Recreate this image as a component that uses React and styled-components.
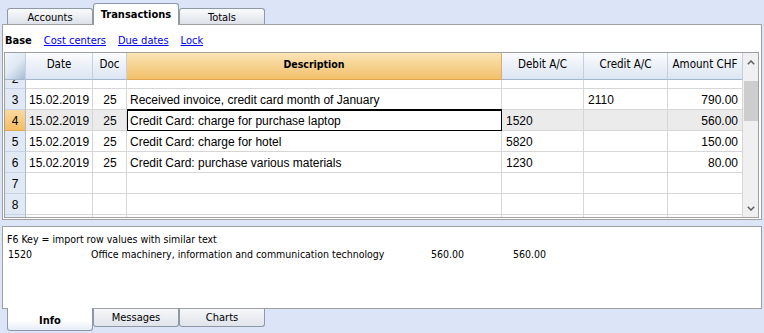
import React from 'react';
import styled, { createGlobalStyle, css } from 'styled-components';

const UI = `"DejaVu Sans Condensed", "DejaVu Sans", sans-serif`;
const CELL = `"Liberation Sans", Arial, sans-serif`;

const Global = createGlobalStyle`
  html, body { margin: 0; padding: 0; background: #dbe5f7; }
  body {
    font-family: ${UI};
    font-stretch: condensed;
    font-size: 11px;
    color: #000;
    width: 764px;
    height: 333px;
    overflow: hidden;
  }
`;

const Page = styled.div`
  display: flex;
  flex-direction: column;
  width: 764px;
  height: 333px;
`;

const TopStrip = styled.div`
  display: flex;
  align-items: flex-end;
  height: 24px;
  padding-left: 7px;
`;

const TopTab = styled.div`
  box-sizing: border-box;
  width: 86px;
  height: ${p => (p.$active ? 22 : 16)}px;
  border: 1px solid #8f99a6;
  border-bottom: none;
  border-radius: 3px 3px 0 0;
  display: flex;
  align-items: center;
  justify-content: center;
  padding-top: ${p => (p.$active ? 0 : 1)}px;
  background: linear-gradient(#fafbfc, #dde2e9);
  ${p =>
    p.$active &&
    css`
      background: #fff;
      font-weight: bold;
      margin-bottom: -1px;
      position: relative;
      z-index: 1;
    `}
`;

const Panel = styled.div`
  box-sizing: border-box;
  margin-left: 2px;
  width: 760px;
  height: 196px;
  border: 1px solid #a0a0a0;
  background: #fff;
  display: flex;
  flex-direction: column;
`;

const LinkBar = styled.div`
  height: 27px;
  display: flex;
  align-items: center;
  gap: 12px;
  padding: 3px 0 0 2px;
  box-sizing: border-box;
`;

const BaseLabel = styled.span`
  font-weight: bold;
`;

const LinkItem = styled.a`
  color: #0000ee;
  text-decoration: underline;
  cursor: pointer;
`;

const GridFrame = styled.div`
  box-sizing: border-box;
  margin-left: 1px;
  width: 755px;
  height: 166px;
  border: 1px solid #a0a0a0;
  display: flex;
`;

const GridArea = styled.div`
  width: 738px;
  display: flex;
  flex-direction: column;
`;

const COLS = '21px 67px 34px 375px 82px 84px 75px';

const HeaderRow = styled.div`
  display: grid;
  grid-template-columns: ${COLS};
  height: 27px;
`;

const HeadCell = styled.div`
  box-sizing: border-box;
  border-right: 1px solid #c3d0e1;
  border-bottom: 1px solid #a3b6ce;
  background: linear-gradient(#fbfcfe, #dbe5f2);
  display: flex;
  align-items: center;
  justify-content: center;
  padding-bottom: 4px;
  font-size: 11.5px;
  ${p =>
    p.$focus &&
    css`
      background: linear-gradient(#fbe4b6, #f2c06a);
      border-right-color: #e0ad62;
      border-bottom-color: #e0a550;
      font-weight: bold;
      font-size: 10.5px;
    `}
  ${p =>
    p.$corner &&
    css`
      background: linear-gradient(135deg, #f4f7fc 0%, #dfe8f4 50%, #a9bdd6 100%);
    `}
`;

const BodyClip = styled.div`
  height: 137px;
  overflow: hidden;
`;

const BodyScroll = styled.div`
  margin-top: -12px;
`;

const Row = styled.div`
  display: grid;
  grid-template-columns: ${COLS};
  height: 21px;
`;

const RowHead = styled.div`
  box-sizing: border-box;
  border-right: 1px solid #a9bcd5;
  border-bottom: 1px solid #c6d3e4;
  background: #e1e9f5;
  font-family: ${CELL};
  font-size: 12px;
  display: flex;
  align-items: center;
  justify-content: center;
  padding-top: 1px;
  ${p =>
    p.$active &&
    css`
      background: linear-gradient(#fcd9a0, #f7bd62);
      border-bottom-color: #e2a852;
    `}
`;

const Cell = styled.div`
  box-sizing: border-box;
  border-right: 1px solid #d6d6d6;
  border-bottom: 1px solid #d6d6d6;
  background: ${p => (p.$sel ? '#ebebeb' : '#fff')};
  font-family: ${CELL};
  font-size: 12px;
  display: flex;
  align-items: center;
  padding: 1px ${p => (p.$align === 'right' ? 4 : 3)}px 0 ${p => (p.$pad ?? 3)}px;
  justify-content: ${p =>
    p.$align === 'right' ? 'flex-end' : p.$align === 'center' ? 'center' : 'flex-start'};
  white-space: nowrap;
  overflow: visible;
  ${p =>
    p.$current &&
    css`
      background: #fff;
      position: relative;
      outline: 1px solid #000;
      outline-offset: -1px;
      box-shadow: 0 -1px 0 #000;
    `}
`;

const ScrollBar = styled.div`
  width: 15px;
  background: #f0f0f0;
  display: flex;
  flex-direction: column;
`;

const ScrollBtn = styled.div`
  height: ${p => p.$h}px;
  display: flex;
  align-items: center;
  justify-content: center;
  padding-bottom: ${p => p.$pb || 0}px;
  box-sizing: border-box;
`;

const Thumb = styled.div`
  margin: 1px 0 0 1px;
  width: 14px;
  height: 40px;
  background: #cdcdcd;
`;

const Spacer = styled.div`
  flex: 1;
`;

const LowerPanel = styled.div`
  box-sizing: border-box;
  margin: 6px 0 0 2px;
  width: 760px;
  height: 83px;
  border: 1px solid #a0a0a0;
  background: #fff;
  padding: 5px 0 0 4px;
  line-height: 15px;
  font-size: 10.5px;
`;

const InfoRow = styled.div`
  display: grid;
  grid-template-columns: 83px 340px 82px auto;
  padding-left: 1px;
  white-space: nowrap;
`;

const BottomStrip = styled.div`
  display: flex;
  align-items: flex-start;
  padding-left: 7px;
`;

const BottomTab = styled.div`
  box-sizing: border-box;
  width: 86px;
  height: ${p => (p.$active ? 23 : 18)}px;
  border: 1px solid #8f99a6;
  border-top: none;
  border-radius: 0 0 3px 3px;
  display: flex;
  align-items: center;
  justify-content: center;
  background: linear-gradient(#f6f7f9, #dfe4eb);
  ${p =>
    p.$active &&
    css`
      background: linear-gradient(#ffffff 55%, #e6edf8);
      font-weight: bold;
      margin-top: -1px;
      padding-top: 2px;
      position: relative;
      z-index: 1;
    `}
`;

const Chevron = ({ up }) => (
  <svg width="8" height="5" viewBox="0 0 8 5">
    <polyline
      points={up ? '0.8,4.2 4,1 7.2,4.2' : '0.8,0.8 4,4 7.2,0.8'}
      fill="none"
      stroke="#606060"
      strokeWidth="1.5"
    />
  </svg>
);

const rows = [
  { n: 2 },
  { n: 3, date: '15.02.2019', doc: '25', desc: 'Received invoice, credit card month of January', credit: '2110', amt: '790.00' },
  { n: 4, date: '15.02.2019', doc: '25', desc: 'Credit Card: charge for purchase laptop', debit: '1520', amt: '560.00', sel: true },
  { n: 5, date: '15.02.2019', doc: '25', desc: 'Credit Card: charge for hotel', debit: '5820', amt: '150.00' },
  { n: 6, date: '15.02.2019', doc: '25', desc: 'Credit Card: purchase various materials', debit: '1230', amt: '80.00' },
  { n: 7 },
  { n: 8 },
  { n: 9 },
];

export default function App() {
  return (
    <Page>
      <Global />
      <TopStrip>
        <TopTab>Accounts</TopTab>
        <TopTab $active>Transactions</TopTab>
        <TopTab>Totals</TopTab>
      </TopStrip>
      <Panel>
        <LinkBar>
          <BaseLabel>Base</BaseLabel>
          <LinkItem>Cost centers</LinkItem>
          <LinkItem>Due dates</LinkItem>
          <LinkItem>Lock</LinkItem>
        </LinkBar>
        <GridFrame>
          <GridArea>
            <HeaderRow>
              <HeadCell $corner />
              <HeadCell>Date</HeadCell>
              <HeadCell>Doc</HeadCell>
              <HeadCell $focus>Description</HeadCell>
              <HeadCell>Debit A/C</HeadCell>
              <HeadCell>Credit A/C</HeadCell>
              <HeadCell>Amount CHF</HeadCell>
            </HeaderRow>
            <BodyClip>
              <BodyScroll>
                {rows.map(r => (
                  <Row key={r.n}>
                    <RowHead $active={r.sel}>{r.n}</RowHead>
                    <Cell $sel={r.sel}>{r.date}</Cell>
                    <Cell $sel={r.sel} $align="center" $pad={4}>{r.doc}</Cell>
                    <Cell $sel={r.sel} $current={r.sel}>{r.desc}</Cell>
                    <Cell $sel={r.sel} $pad={4}>{r.debit}</Cell>
                    <Cell $sel={r.sel} $pad={4}>{r.credit}</Cell>
                    <Cell $sel={r.sel} $align="right">{r.amt}</Cell>
                  </Row>
                ))}
              </BodyScroll>
            </BodyClip>
          </GridArea>
          <ScrollBar>
            <ScrollBtn $h={27} $pb={9}>
              <Chevron up />
            </ScrollBtn>
            <Thumb />
            <Spacer />
            <ScrollBtn $h={17} $pb={0}>
              <Chevron />
            </ScrollBtn>
          </ScrollBar>
        </GridFrame>
      </Panel>
      <LowerPanel>
        <div>F6 Key = import row values with similar text</div>
        <InfoRow>
          <span>1520</span>
          <span>Office machinery, information and communication technology</span>
          <span>560.00</span>
          <span>560.00</span>
        </InfoRow>
      </LowerPanel>
      <BottomStrip>
        <BottomTab $active>Info</BottomTab>
        <BottomTab>Messages</BottomTab>
        <BottomTab>Charts</BottomTab>
      </BottomStrip>
    </Page>
  );
}
